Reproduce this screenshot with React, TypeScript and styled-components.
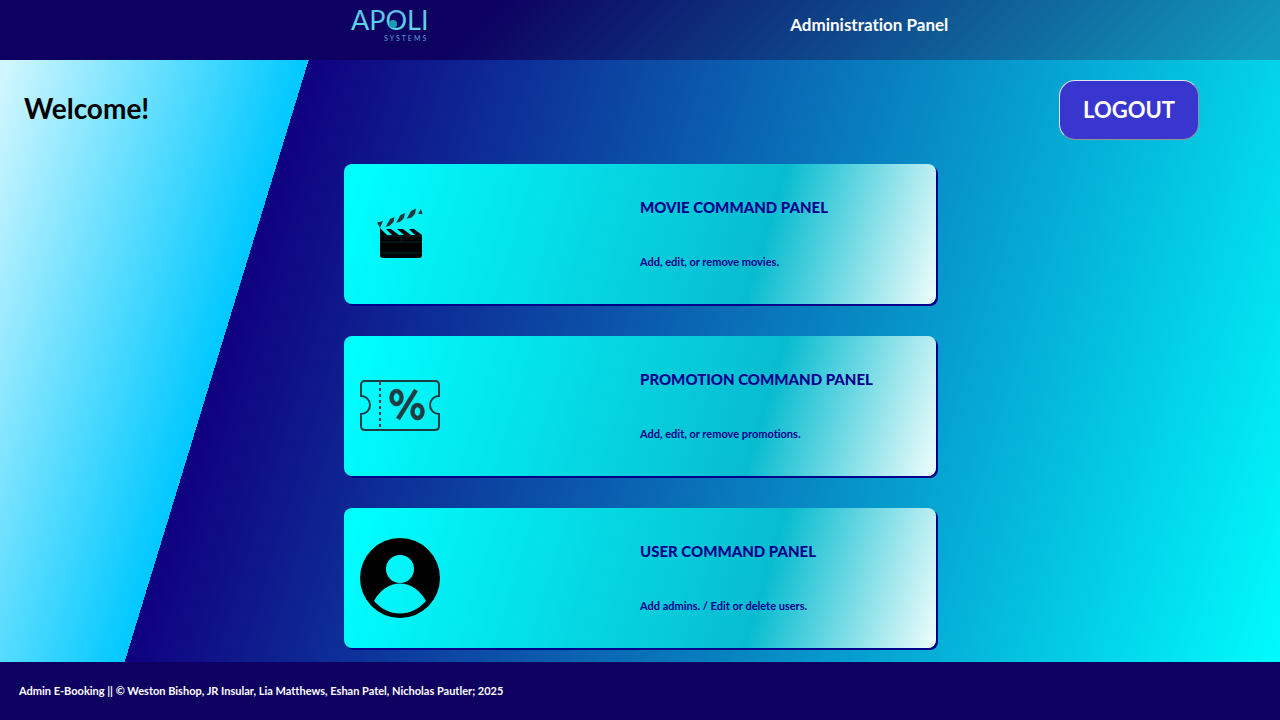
import React from "react";
import styled, { createGlobalStyle } from "styled-components";

const GlobalStyle = createGlobalStyle`
  *, *::before, *::after { box-sizing: border-box; }
  body {
    margin: 0;
    font-family: Lato, "Liberation Sans", sans-serif;
    font-weight: 700;
    font-variant-ligatures: none;
  }
  h1, h2, h3, p { margin: 0; }
`;

const Page = styled.div`
  min-height: 100vh;
  display: flex;
  flex-direction: column;
  background: linear-gradient(107deg, #e2faff 0%, #00c8ff 21.8%, #100080 21.8%, #00ffff 100%);
`;

const Header = styled.header`
  display: grid;
  grid-template-columns: 1fr 1fr;
  height: 60px;
  padding: 0 171px 0 150px;
  background: linear-gradient(135deg, #0d0060 37%, #1199bb 98%);
`;

const HeaderCell = styled.div`
  display: flex;
  justify-content: center;
  align-items: flex-start;
`;

const PanelTitle = styled.h1`
  padding-top: 13px;
  font-size: 17px;
  line-height: 24px;
  color: #ffffff;
`;

const Main = styled.main`
  flex: 1;
  padding: 20px 24px 14px;
`;

const TopRow = styled.div`
  display: flex;
  justify-content: space-between;
  align-items: flex-start;
  padding-right: 57px;
`;

const Welcome = styled.h2`
  padding-top: 8px;
  font-size: 28px;
  line-height: 40px;
  color: #000000;
`;

const LogoutButton = styled.button`
  width: 140px;
  height: 60px;
  padding: 0;
  border: 1px outset #e4e4ee;
  border-radius: 16px;
  background: #3936d0;
  color: #ffffff;
  font: 700 22px/32px Lato, "Liberation Sans", sans-serif;
  cursor: pointer;
`;

const CardList = styled.div`
  display: grid;
  gap: 32px;
  width: 48%;
  margin: 24px auto 0;
`;

const Card = styled.a`
  display: grid;
  grid-template-columns: 1fr 1fr;
  align-items: center;
  height: 140px;
  border-radius: 8px;
  background: linear-gradient(107deg, #00ffff 2%, #08bcd0 70%, #f0fdfc 100%);
  box-shadow: 2px 2px 0 #00008b;
  color: #00008b;
  text-decoration: none;
`;

const CardIcon = styled.svg`
  width: 80px;
  height: 80px;
  margin-left: 16px;
`;

const CardText = styled.div`
  display: grid;
  gap: 34px;
`;

const CardTitle = styled.h3`
  font-size: 15px;
  font-weight: 900;
  line-height: 22px;
`;

const CardNote = styled.p`
  font-size: 11px;
  line-height: 20px;
`;

const Footer = styled.footer`
  display: flex;
  align-items: center;
  height: 58px;
  padding: 0 19px;
  background: #0d0060;
  color: #ffffff;
  font-size: 11px;
  line-height: 20px;
`;

const Logo = () => (
  <svg width="80" height="46" viewBox="0 0 80 46" role="img" aria-label="Apoli Systems">
    <defs>
      <linearGradient id="logoTint" x1="0" y1="0" x2="0" y2="1">
        <stop offset="0" stopColor="#5fb4ee" />
        <stop offset="1" stopColor="#5fe0e4" />
      </linearGradient>
    </defs>
    <text x="1" y="30" fontSize="27" fontWeight="400" fill="url(#logoTint)">APOLI</text>
    <circle cx="43" cy="24" r="4" fill="#1a9cb8" />
    <text x="34" y="41" fontSize="7" fontWeight="400" letterSpacing="2" fill="#5b9fd6">SYSTEMS</text>
  </svg>
);

const MovieIcon = () => (
  <CardIcon viewBox="0 0 80 80" aria-hidden="true">
    <path
      fill="#22363b"
      d="M17 28.500L23 27L20 34ZM25.500 33L30 25L34.500 23L33.500 28L30 31.500ZM36 29L40.500 21L45 19L44 24L40.500 27.500ZM46.500 25L51 17L56 14.500L55 20L51.500 23.500ZM58 20L61 15L62.500 20Z"
    />
    <path fill="#000" d="M20 34L27 41H32L26 35H31L39 41H44L37 35H43L51 41H55L49 35H54L62 41V61Q62 64 59 64H23Q20 64 20 61Z" />
    <path stroke="#06484a" strokeWidth=".6" fill="none" d="M20 42H62M20 48H62M20 59H62M41 42V48" />
  </CardIcon>
);

const PromotionIcon = () => (
  <CardIcon viewBox="0 0 80 80" aria-hidden="true">
    <g fill="none" stroke="#1c3d42" strokeWidth="2">
      <path d="M5 15H75Q79 15 79 19V30A9 9 0 0 0 79 48V60Q79 64 75 64H5Q1 64 1 60V48A9 9 0 0 0 1 30V19Q1 15 5 15Z" />
      <path d="M20 16V64" strokeDasharray="3 3" />
    </g>
    <g fill="none" stroke="#1c3d42" strokeWidth="4.400">
      <ellipse cx="36.500" cy="31.500" rx="5" ry="6.500" />
      <ellipse cx="57.500" cy="45.500" rx="5" ry="6.500" />
      <path d="M56 24L38 53" />
    </g>
  </CardIcon>
);

const UserIcon = () => (
  <CardIcon viewBox="0 0 80 80" aria-hidden="true">
    <path
      fill="#000"
      fillRule="evenodd"
      d="M40 0A40 40 0 1 1 40 80A40 40 0 1 1 40 0ZM40 17A14 14 0 1 0 40 45A14 14 0 1 0 40 17ZM14 63C20 52 29 45.500 40 45.500S60 52 66 63C59 71 50 75.500 40 75.500S21 71 14 63Z"
    />
  </CardIcon>
);

const cards = [
  { title: "MOVIE COMMAND PANEL", note: "Add, edit, or remove movies.", href: "#movies", Icon: MovieIcon },
  { title: "PROMOTION COMMAND PANEL", note: "Add, edit, or remove promotions.", href: "#promotions", Icon: PromotionIcon },
  { title: "USER COMMAND PANEL", note: "Add admins. / Edit or delete users.", href: "#users", Icon: UserIcon },
];

export default function App() {
  return (
    <Page>
      <GlobalStyle />
      <Header>
        <HeaderCell><Logo /></HeaderCell>
        <HeaderCell><PanelTitle>Administration Panel</PanelTitle></HeaderCell>
      </Header>
      <Main>
        <TopRow>
          <Welcome>Welcome!</Welcome>
          <LogoutButton type="button">LOGOUT</LogoutButton>
        </TopRow>
        <CardList>
          {cards.map(({ title, note, href, Icon }) => (
            <Card key={title} href={href}>
              <Icon />
              <CardText>
                <CardTitle>{title}</CardTitle>
                <CardNote>{note}</CardNote>
              </CardText>
            </Card>
          ))}
        </CardList>
      </Main>
      <Footer>Admin E-Booking || © Weston Bishop, JR Insular, Lia Matthews, Eshan Patel, Nicholas Pautler; 2025</Footer>
    </Page>
  );
}
